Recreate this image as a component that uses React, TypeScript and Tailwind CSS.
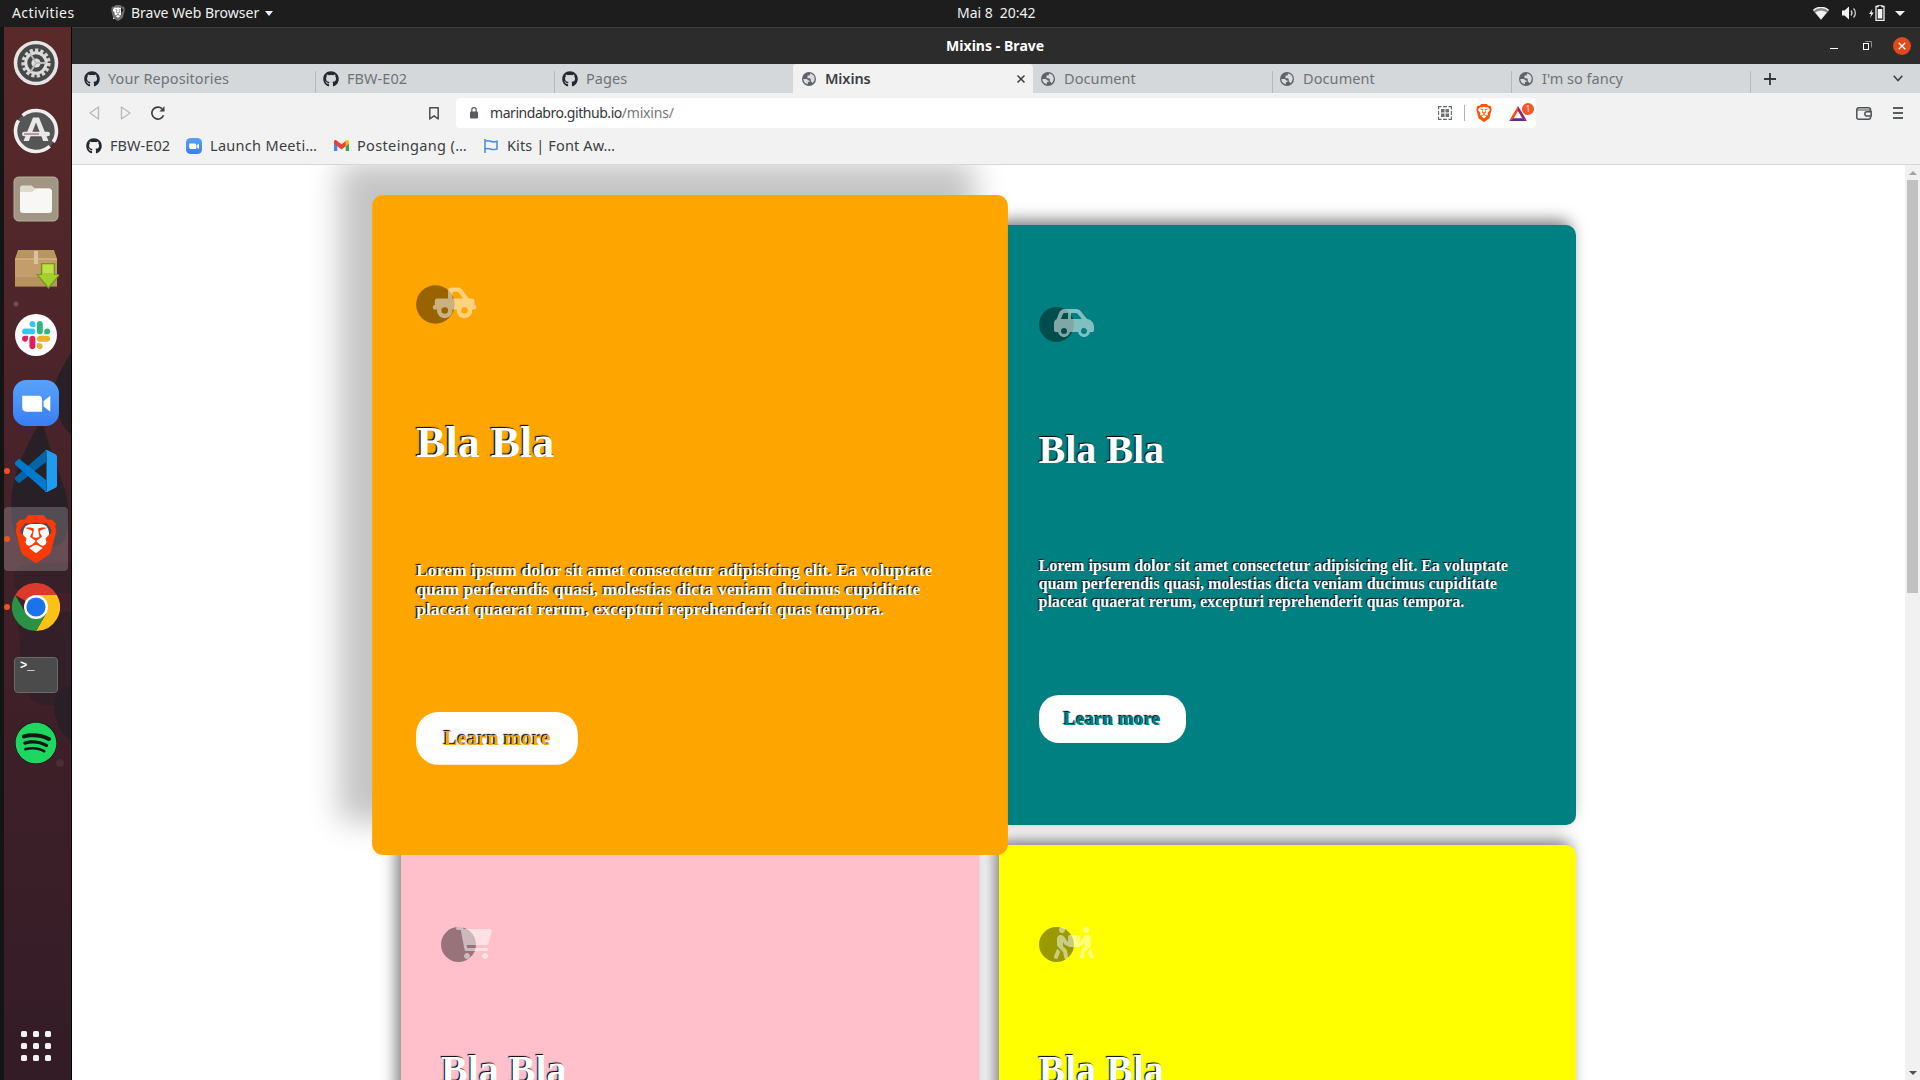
import type { ReactNode } from "react";
import { FaCarSide, FaTruckPickup, FaPeopleCarryBox, FaGithub, FaSpotify } from "react-icons/fa6";
import { SiBrave } from "react-icons/si";

/* ---------- Shared glyphs ---------- */

function Brave({ size, gradient }: { size: number; gradient?: boolean }) {
  return (
    <span className="relative grid place-items-center" style={{ width: size, height: size }}>
      <span className="absolute h-[62%] w-[56%] rounded-[30%] bg-white" />
      <SiBrave size={size} className={gradient ? "relative text-[#fb3a08]" : "relative text-[#fb5607]"} />
    </span>
  );
}

function Globe() {
  return (
    <svg width="14" height="14" viewBox="0 0 14 14">
      <circle cx="7" cy="7" r="7" fill="#5f6368" />
      <path d="M1.3 7h3.4c.9 0 1 1.6 2 1.6h.8v1.5H5.9v2.1C3 11.800 1.300 9.600 1.300 7z" fill="#d9dcdf" />
      <path d="M5.500 4.900V3.600h2.200V2.200l.8-.7c2.500.6 4.100 2.600 4.200 5 0 2-1 3.800-2.500 4.800 0-1-.4-1.500-1.400-1.500V7.600c-.2-1-.8-1.300-1.800-1.300H5.500z" fill="#d9dcdf" />
    </svg>
  );
}

function ZoomLogo({ size }: { size: number }) {
  return (
    <svg width={size} height={size} viewBox="0 0 45 45">
      <defs>
        <linearGradient id="zoomBlue" x1="0" y1="0" x2="0" y2="1">
          <stop offset="0" stopColor="#57a2fb" />
          <stop offset="1" stopColor="#3b7df5" />
        </linearGradient>
      </defs>
      <rect width="45" height="45" rx="13" fill="url(#zoomBlue)" />
      <path d="M9 15.500h15.500a4 4 0 0 1 4 4V31H13a4 4 0 0 1-4-4z" fill="#fff" />
      <path d="M30 20.500l6.500-5v15.500l-6.500-5z" fill="#fff" />
    </svg>
  );
}

/* ---------- Desktop top bar ---------- */

function TopBar() {
  return (
    <header className="relative flex h-[27px] shrink-0 items-center justify-between bg-[#1d1d1d] font-['Noto_Sans',sans-serif] text-[14px] leading-none text-[#f0f0f0]">
      <div className="flex items-center pb-px pl-3">
        <span className="w-[98px] tracking-[0.42px]">Activities</span>
        <span className="relative grid h-4 w-[14px] place-items-center">
          <span className="absolute h-3 w-2 bg-white" />
          <SiBrave size={16} className="relative text-[#6f6f6f]" />
        </span>
        <span className="ml-[7px]">Brave Web Browser</span>
        <span className="ml-[6px] mt-px border-x-[4.5px] border-t-[5px] border-x-transparent border-t-[#f0f0f0]" />
      </div>
      <div className="absolute left-[957px] flex gap-[7px] pb-px">
        <span>Mai 8</span>
        <span>20:42</span>
      </div>
      <div className="flex items-center pb-px pr-[15px]">
        <svg width="16" height="13" viewBox="0 0 16 13">
          <path d="M0 3.600C4.500-.6 11.500-.6 16 3.600L8 13z" fill="#8a8a8a" />
          <path d="M.3 3.300C4.500-.6 11.500-.6 15.700 3.300" fill="none" stroke="#f2f2f2" strokeWidth="1.400" />
          <path d="M2.300 5.500C5.500 3 10.500 3 13.700 5.500L8 12.500z" fill="#f2f2f2" />
        </svg>
        <svg className="ml-[13px]" width="15" height="14" viewBox="0 0 15 14">
          <path d="M0 4.500h2.500L7 .5v13L2.500 9.500H0z" fill="#f2f2f2" />
          <path d="M9 4.500c1.200 1.500 1.200 3.500 0 5M11.500 2.500c2.500 2.500 2.500 6.500 0 9" fill="none" stroke="#d0d0d0" strokeWidth="1.300" />
        </svg>
        <svg className="ml-[12px]" width="16" height="16" viewBox="0 0 16 16">
          <path d="M3.500 4L0 9h2.200L1 13l3.700-5.500H2.500z" fill="#f2f2f2" />
          <path d="M9 1.500V0h4v1.500h2V15.300H7V1.500z" fill="none" stroke="#f2f2f2" strokeWidth="1.300" />
          <rect x="8.700" y="4" width="4.600" height="9.500" fill="#f2f2f2" />
        </svg>
        <span className="ml-[10px] border-x-[5px] border-t-[5px] border-x-transparent border-t-[#f0f0f0]" />
      </div>
    </header>
  );
}

/* ---------- Dock ---------- */

function DockItem({ children, running, active }: { children: ReactNode; running?: boolean; active?: boolean }) {
  return (
    <div className="relative flex h-[68px] w-full items-center justify-center">
      {active && <span className="absolute inset-x-1 inset-y-[2px] rounded-[4px] bg-white/20" />}
      {running && <span className="absolute left-1 top-[31px] size-[6px] rounded-full bg-[#e95420]" />}
      <span className="relative">{children}</span>
    </div>
  );
}

function SettingsIcon() {
  return (
    <svg width="46" height="46" viewBox="0 0 46 46">
      <circle cx="23" cy="23" r="20.500" fill="#484848" stroke="#e4e4e4" strokeWidth="3.600" />
      <circle cx="23" cy="23" r="12.800" fill="none" stroke="#d6d6d6" strokeWidth="3.600" strokeDasharray="3.200 2.160" />
      <circle cx="23" cy="23" r="10.200" fill="none" stroke="#dcdcdc" strokeWidth="3" />
      <circle cx="23" cy="23" r="4.600" fill="#e0e0e0" />
      <path d="M23 23h10M23 23l-5.500-9M23 23l-5.500 9" stroke="#bdbdbd" strokeWidth="1.800" />
    </svg>
  );
}

function SoftwareIcon() {
  return (
    <svg width="46" height="46" viewBox="0 0 46 46">
      <circle cx="23" cy="23" r="21" fill="#565656" />
      <circle cx="23" cy="23" r="20.500" fill="none" stroke="#eee" strokeWidth="3.600" strokeDasharray="58 6.400" transform="rotate(48 23 23)" />
      <path d="M20 9.500h6L35.500 33h-5.300L23 14.500 15.800 33h-5.300z" fill="#e8e8e8" />
      <rect x="9" y="23.800" width="28" height="4.400" rx="2.200" fill="#e8e8e8" />
      <path d="M11 26h15" stroke="#87407a" strokeWidth="1" />
    </svg>
  );
}

function FilesIcon() {
  return (
    <svg width="46" height="46" viewBox="0 0 46 46">
      <rect x="1" y="1" width="44" height="44" rx="4.500" fill="#a09683" stroke="#b8af9d" strokeWidth="1" />
      <path d="M7 12a2.500 2.500 0 0 1 2.500-2.500h9l3.500 3h15v8H7z" fill="#dedacd" />
      <path d="M7 16h12.500l3-3.500H36a3 3 0 0 1 3 3V34a3 3 0 0 1-3 3H10a3 3 0 0 1-3-3z" fill="#f8f7f5" />
    </svg>
  );
}

function PackageIcon() {
  return (
    <svg className="mt-[3px]" width="46" height="40" viewBox="0 0 46 40">
      <path d="M5 1h36l3 9H2z" fill="#ba9560" />
      <path d="M2 10h42v27.500H2z" fill="#c39e6b" />
      <path d="M2 28h42v9.500H2z" fill="#a9854f" opacity=".5" />
      <path d="M2 10h42" stroke="#dcc096" />
      <path d="M21 2h4v13h-4z" fill="#d9c2a0" />
      <path d="M28.500 14.500h13v11h5L35.500 39 24 25.500h4.500z" fill="#a5d02c" stroke="#6d9a22" strokeWidth="1.200" />
      <path d="M30 16h10v8H30z" fill="#d0e65b" opacity=".7" />
    </svg>
  );
}

function SlackIcon() {
  return (
    <svg width="42" height="42" viewBox="0 0 42 42">
      <circle cx="21" cy="21" r="21" fill="#fff" />
      <g transform="translate(7 7) scale(.2296)">
        <path d="M25.800 77.600c0 7.100-5.800 12.900-12.900 12.900S0 84.700 0 77.600s5.800-12.900 12.900-12.900h12.900zM32.300 77.600c0-7.100 5.800-12.900 12.900-12.900s12.900 5.800 12.900 12.900v32.300c0 7.100-5.800 12.900-12.900 12.900s-12.900-5.800-12.900-12.900z" fill="#E01E5A" />
        <path d="M45.200 25.800c-7.100 0-12.900-5.800-12.900-12.900S38.100 0 45.200 0s12.900 5.800 12.900 12.900v12.900zM45.200 32.300c7.100 0 12.900 5.800 12.900 12.900s-5.800 12.900-12.900 12.900H12.900C5.800 58.100 0 52.300 0 45.200s5.800-12.900 12.900-12.900z" fill="#36C5F0" />
        <path d="M97 45.200c0-7.100 5.800-12.900 12.900-12.900s12.900 5.800 12.900 12.900-5.800 12.900-12.900 12.900H97zM90.500 45.200c0 7.100-5.800 12.900-12.900 12.900s-12.900-5.800-12.900-12.900V12.900C64.700 5.800 70.500 0 77.600 0s12.900 5.800 12.900 12.900z" fill="#2EB67D" />
        <path d="M77.600 97c7.100 0 12.900 5.800 12.900 12.900s-5.800 12.900-12.900 12.900-12.900-5.800-12.900-12.900V97zM77.600 90.500c-7.100 0-12.900-5.800-12.900-12.900s5.800-12.900 12.900-12.900h32.300c7.100 0 12.900 5.800 12.900 12.900s-5.800 12.900-12.900 12.900z" fill="#ECB22E" />
      </g>
    </svg>
  );
}

function CodeIcon() {
  return (
    <svg width="42" height="42" viewBox="0 0 42 42">
      <path d="M0 27.500L31 0v12L5 32.500a1.500 1.500 0 0 1-2 0L.5 30a1.700 1.700 0 0 1-.5-2.500z" fill="#0065a9" />
      <path d="M0 14.500L31 42V30L5 9.500a1.500 1.500 0 0 0-2 0L.5 12A1.700 1.700 0 0 0 0 14.500z" fill="#007acc" />
      <path d="M31 42a2.800 2.800 0 0 1-1.500-.8c.8.8 2 .2 2-.9V1.700c0-1.100-1.200-1.700-2-.9A2.800 2.800 0 0 1 32.500.3l8 3.900A2.600 2.600 0 0 1 42 6.500v29a2.600 2.600 0 0 1-1.500 2.300l-8 3.900a2.600 2.600 0 0 1-1.500.3z" fill="#1f9cf0" />
    </svg>
  );
}

function ChromeIcon() {
  return (
    <svg width="48" height="48" viewBox="0 0 48 48">
      <path d="M24 24L3.200 12A24 24 0 0 1 44.800 12z" fill="#dc3a2d" />
      <path d="M24 12h20.800A24 24 0 0 1 24 48l10.400-18z" fill="#fbc116" />
      <path d="M3.200 12A24 24 0 0 0 24 48l10.400-18H13.600z" fill="#2a9245" />
      <circle cx="24" cy="24" r="12" fill="#fff" />
      <circle cx="24" cy="24" r="9.600" fill="#1a73e8" />
    </svg>
  );
}

function TerminalIcon() {
  return (
    <div className="h-9 w-11 rounded-[4px] border border-[#6a6a6a] bg-[#4b4b4b] pl-[5px] pt-[2px] font-['Liberation_Mono',monospace] text-[12px] font-bold leading-[12px] text-white">
      &gt;_
    </div>
  );
}

function Dock() {
  return (
    <aside className="relative flex w-[72px] shrink-0 flex-col border-l-4 border-r border-l-[#141414] border-r-black bg-linear-to-b from-[#5a2a2a] via-[#44212a] to-[#331c26] pt-[2px]">
      <svg className="absolute left-0 top-0" width="67" height="760" viewBox="0 0 67 760" fill="#232027" fillOpacity=".85">
        <path d="M67 325C56 345 48 356 50 372c3 16 8 28 17 36z" />
        <path d="M34 398C22 420 12 440 8 465c-2 18-1 32 5 48 10 12 18 4 22-2 6 8 20 12 26 0 6-16 4-34 0-48C54 440 46 424 40 400z" />
        <path d="M10 545c14-14 40-6 57-10v32c-20-4-40 4-57-6z" fillOpacity=".35" />
        <path d="M10 590c10 20 4 50 10 70s30 22 47 14v-90z" fillOpacity=".45" />
        <path d="M67 660c-16 0-20 18-15 32 4 14 9 18 15 22z" fillOpacity=".7" />
        <circle cx="12" cy="277" r="2.500" fill="#8a6a6a" fillOpacity=".6" />
        <circle cx="56" cy="736" r="4" fill="#6a5054" fillOpacity=".3" />
      </svg>
      <div className="-ml-1 flex w-[72px] flex-col">
        <DockItem><SettingsIcon /></DockItem>
        <DockItem><SoftwareIcon /></DockItem>
        <DockItem><FilesIcon /></DockItem>
        <DockItem><PackageIcon /></DockItem>
        <DockItem><SlackIcon /></DockItem>
        <DockItem><ZoomLogo size={46} /></DockItem>
        <DockItem running><CodeIcon /></DockItem>
        <DockItem running active><Brave size={48} gradient /></DockItem>
        <DockItem running><ChromeIcon /></DockItem>
        <DockItem><TerminalIcon /></DockItem>
        <DockItem>
          <span className="grid size-[42px] place-items-center rounded-full bg-[#161616]">
            <FaSpotify size={42} className="text-[#1ed760]" />
          </span>
        </DockItem>
      </div>
      <div className="mb-[19px] ml-[17px] mt-auto grid w-[30px] grid-cols-3 gap-[6px]">
        {Array.from({ length: 9 }, (_, i) => (
          <span key={i} className="size-[6px] rounded-[1.5px] bg-[#f2f2f2]" />
        ))}
      </div>
    </aside>
  );
}

/* ---------- Browser chrome ---------- */

function TitleBar() {
  return (
    <div className="relative flex h-[37px] shrink-0 items-center justify-end border-t border-[#3d3d3d] bg-[#2c2c2c] pb-px pr-[9px] font-['Noto_Sans',sans-serif]">
      <div className="absolute left-[874px] top-[11px] text-[14px] font-bold leading-none tracking-[0.05px] text-white">Mixins - Brave</div>
      <span className="mr-[25px] mt-[5px] h-px w-2 bg-white" />
      <svg className="mr-[21px]" width="9" height="9" viewBox="0 0 9 9" fill="none">
        <path d="M2.500.5h6v6" stroke="#8c8c8c" />
        <rect x=".5" y="2.500" width="5" height="6" stroke="#fff" />
      </svg>
      <span className="grid size-[18px] place-items-center rounded-full bg-[#e2491a]">
        <svg width="8" height="8" viewBox="0 0 8 8">
          <path d="M.7.7l6.600 6.600M7.300.7L.7 7.300" stroke="#fff" strokeWidth="1.300" />
        </svg>
      </span>
    </div>
  );
}

type Tab = { title: string; icon: "github" | "globe"; active?: boolean; line?: boolean; tracking: string };

const tabs: Tab[] = [
  { title: "Your Repositories", icon: "github", line: true, tracking: "tracking-[0.09px]" },
  { title: "FBW-E02", icon: "github", line: true, tracking: "tracking-[0.05px]" },
  { title: "Pages", icon: "github", tracking: "tracking-[0.05px]" },
  { title: "Mixins", icon: "globe", active: true, tracking: "tracking-[0.1px]" },
  { title: "Document", icon: "globe", line: true, tracking: "tracking-[0.09px]" },
  { title: "Document", icon: "globe", line: true, tracking: "tracking-[0.09px]" },
  { title: "I'm so fancy", icon: "globe", line: true, tracking: "tracking-[0px]" },
];

function TabStrip() {
  return (
    <div className="flex h-[29px] shrink-0 bg-[#d4d8db] pl-[4px] text-[14.5px] leading-none">
      {tabs.map((tab, i) => (
        <div
          key={i}
          className={
            tab.active
              ? "relative flex w-[240px] items-center rounded-t-[4px] bg-[#f2f2f2] pl-[9px] text-[#3b3e42]"
              : "relative flex w-[239px] items-center pl-[8px] text-[#6f7376]"
          }
        >
          {tab.icon === "github" ? <FaGithub size={16} className="text-[#24292f]" /> : <Globe />}
          <span className={(tab.icon === "github" ? "ml-2 " : "ml-[9px] ") + (tab.active ? "font-semibold tracking-[-0.1px]" : tab.tracking)}>{tab.title}</span>
          {tab.active && (
            <svg className="absolute right-[8px]" width="8" height="8" viewBox="0 0 8 8">
              <path d="M.5.5l7 7M7.500.5l-7 7" stroke="#3a3d40" strokeWidth="1.500" />
            </svg>
          )}
          {tab.line && <span className="absolute -right-px bottom-0 h-[22px] w-px bg-[#b5b9bd]" />}
        </div>
      ))}
      <div className="flex flex-1 items-center justify-between pl-[14px] pr-[17px]">
        <svg width="12" height="12" viewBox="0 0 12 12">
          <path d="M6 0v12M0 6h12" stroke="#33373a" strokeWidth="1.800" />
        </svg>
        <svg width="10" height="7" viewBox="0 0 10 7" fill="none">
          <path d="M.7.800L5 5.500 9.300.800" stroke="#3f4346" strokeWidth="1.600" />
        </svg>
      </div>
    </div>
  );
}

function AddressRow() {
  return (
    <div className="flex h-10 shrink-0 items-center">
      <svg className="ml-[17px]" width="11" height="14" viewBox="0 0 11 14" fill="none">
        <path d="M9.500 1v12L1 7z" stroke="#b9bbbd" strokeWidth="1.400" strokeLinejoin="round" />
      </svg>
      <svg className="ml-[20px]" width="11" height="14" viewBox="0 0 11 14" fill="none">
        <path d="M1.500 1v12L10 7z" stroke="#b9bbbd" strokeWidth="1.400" strokeLinejoin="round" />
      </svg>
      <svg className="ml-[20px]" width="15" height="14" viewBox="0 0 15 14" fill="none">
        <path d="M12.500 9.200A6 6 0 1 1 11 2.700" stroke="#3b3e42" strokeWidth="1.700" />
        <path d="M13.500.300v5.200H8.300z" fill="#3b3e42" />
      </svg>
      <svg className="ml-[263px]" width="10" height="13" viewBox="0 0 10 13" fill="none">
        <path d="M.8.800h8.400v11.200L5 8.800.8 12z" stroke="#4a4d50" strokeWidth="1.500" strokeLinejoin="round" />
      </svg>
      <div className="ml-[17px] flex h-[30px] w-[1080px] items-center rounded-[4px] bg-white pl-[14px] pr-[2px] text-[14px] leading-none">
        <svg width="8" height="12" viewBox="0 0 8 12">
          <rect y="4.500" width="8" height="7" rx="1" fill="#5a5d61" />
          <path d="M1.800 5V2.800a2.200 2.200 0 0 1 4.400 0V5" fill="none" stroke="#5a5d61" strokeWidth="1.200" />
        </svg>
        <span className="ml-[12px] tracking-[-0.45px] text-[#34373b]">marindabro.github.io</span>
        <span className="tracking-[-0.2px] text-[#75787c]">/mixins/</span>
        <div className="ml-auto flex items-center">
          <svg width="14" height="14" viewBox="0 0 14 14">
            <path d="M.6 3.500V.6h2.900M5 .6h4M10.500.6h2.900v2.900M13.400 5v4M13.400 10.500v2.900h-2.900M9 13.400H5M3.500 13.400H.6v-2.900M.6 9V5" fill="none" stroke="#66696c" strokeWidth="1.100" />
            <path d="M3 3h3.500v3.500H3zM7.500 3H11v3.500H7.500zM3 7.500h3.500V11H3zM7.500 7.500H11V11H7.500z" fill="#6f7275" />
          </svg>
          <span className="ml-[12px] h-4 w-px bg-[#b0b3b6]" />
          <span className="ml-[10px]"><Brave size={18} /></span>
          <span className="relative ml-[16px] mr-[7px] mt-px">
            <svg width="18" height="15" viewBox="0 0 18 15">
              <path d="M9 0L0 15l4.600-2.500L9 5z" fill="#ff4724" />
              <path d="M9 0l9 15-4.600-2.500L9 5z" fill="#9e1f63" />
              <path d="M0 15h18l-4.600-2.700H4.600z" fill="#662d91" />
            </svg>
            <span className="absolute -right-[7px] -top-[3px] grid size-3 place-items-center rounded-full bg-[#fb542b] text-[8px] leading-none text-white">1</span>
          </span>
        </div>
      </div>
      <svg className="ml-auto" width="16" height="13" viewBox="0 0 16 13" fill="none" stroke="#4e5154" strokeWidth="1.500">
        <path d="M14.500 4V2.800a2 2 0 0 0-2-2H2.800a2 2 0 0 0-2 2v7.400a2 2 0 0 0 2 2h9.700a2 2 0 0 0 2-2V9.500" />
        <path d="M1 3h13.500V5" strokeWidth="1.200" />
        <path d="M15.200 4.700H11a2 2 0 0 0 0 4.400h4.200z" />
      </svg>
      <div className="ml-[21px] mr-[17px] flex w-[10px] flex-col gap-[3px]">
        <span className="h-[2px] bg-[#5a5d60]" />
        <span className="h-[2px] bg-[#5a5d60]" />
        <span className="h-[2px] bg-[#5a5d60]" />
      </div>
    </div>
  );
}

function BookmarksRow() {
  return (
    <div className="flex h-8 shrink-0 items-center border-b border-[#d4d8db] pb-[6px] pl-[14px] text-[14.5px] leading-none text-[#3b3e42]">
      <FaGithub size={16} className="text-[#24292f]" />
      <span className="ml-2 w-[76px] tracking-[0.05px]">FBW-E02</span>
      <ZoomLogo size={16} />
      <span className="ml-2 w-[124px] tracking-[0.3px]">Launch Meeti…</span>
      <svg width="15" height="11" viewBox="0 0 15 11">
        <path d="M0 1.500V11h3.300V3.500z" fill="#4285f4" />
        <path d="M15 1.500V11h-3.300V3.500z" fill="#34a853" />
        <path d="M11.700 1l1-.7A1.400 1.400 0 0 1 15 1.500v2.300l-3.300 2.500z" fill="#fbbc04" />
        <path d="M3.300 1l-1-.7A1.400 1.400 0 0 0 0 1.500v2.300l7.500 5.700 4.200-3.200V1L7.500 4.200z" fill="#ea4335" />
      </svg>
      <span className="ml-2 w-[127px] tracking-[0.35px]">Posteingang (…</span>
      <svg width="14" height="14" viewBox="0 0 14 14" fill="none" stroke="#4d8fdb" strokeWidth="1.600">
        <path d="M1 0v14" />
        <path d="M1 2.300c2.200-.8 3.700-.8 5.500 0s3.700.8 6.500 0v7.700c-2.800.8-4.700.8-6.500 0s-3.300-.8-5.500 0" />
      </svg>
      <span className="ml-[9px] tracking-[0.13px]">Kits | Font Aw…</span>
    </div>
  );
}

/* ---------- Page ---------- */

function CartIcon() {
  return (
    <svg width="36" height="32" viewBox="0 0 576 512" fill="currentColor">
      <path d="M96 0C107.500 0 117.400 8.190 119.600 19.510L121.100 32H541.800C562.100 32 578.300 52.250 572.600 72.660L518.600 264.700C514.700 278.500 502.100 288 487.800 288H170.700L179.900 336H488C501.300 336 512 346.700 512 360C512 373.300 501.300 384 488 384H159.100C148.500 384 138.600 375.800 136.400 364.500L76.140 48H24C10.750 48 0 37.250 0 24C0 10.750 10.750 0 24 0H96zM128 464C128 437.500 149.500 416 176 416C202.500 416 224 437.500 224 464C224 490.500 202.500 512 176 512C149.500 512 128 490.500 128 464zM512 464C512 490.500 490.500 512 464 512C437.500 512 416 490.500 416 464C416 437.500 437.500 416 464 416C490.500 416 512 437.500 512 464z" />
    </svg>
  );
}

type CardProps = { card: string; button: string; icon: ReactNode };

const cards: CardProps[] = [
  {
    card: "z-10 scale-110 bg-[#ffa500] shadow-[-30px_-30px_28px_rgba(0,0,0,0.23)]",
    button: "text-[#ffa500]",
    icon: <FaTruckPickup className="h-8 w-10" />,
  },
  {
    card: "bg-[#008080] shadow-[-5px_-5px_15px_rgba(0,0,0,0.5)]",
    button: "text-[#008080]",
    icon: <FaCarSide className="h-8 w-10" />,
  },
  {
    card: "bg-[#ffc0cb] shadow-[-5px_-5px_15px_rgba(0,0,0,0.5)]",
    button: "text-[#ffc0cb]",
    icon: <CartIcon />,
  },
  {
    card: "bg-[#ffff00] shadow-[-5px_-5px_15px_rgba(0,0,0,0.5)]",
    button: "text-[#ffff00]",
    icon: <FaPeopleCarryBox className="h-8 w-10" />,
  },
];

function Card({ card, button, icon }: CardProps) {
  return (
    <article className={"relative flex h-[600px] flex-col items-start justify-around rounded-[10px] p-10 text-white [text-shadow:-1px_-1px_1px_#000] " + card}>
      <div className="relative size-[35px] rounded-full bg-black/40">
        <span className="absolute left-[15px] top-0 text-white/50">{icon}</span>
      </div>
      <h1 className="pt-px text-[40px] font-bold leading-[46px]">Bla Bla</h1>
      <p className="text-[16px] font-bold leading-[18px]">
        Lorem ipsum dolor sit amet consectetur adipisicing elit. Ea voluptate quam perferendis quasi, molestias dicta veniam
        ducimus cupiditate placeat quaerat rerum, excepturi reprehenderit quas tempora.
      </p>
      <button className={"h-12 w-[147px] rounded-[20px] bg-white text-[19.200px] font-bold leading-[22px] [text-shadow:-1px_-1px_1px_#000] " + button}>
        Learn more
      </button>
    </article>
  );
}

function Scrollbar() {
  return (
    <div className="flex w-[15px] shrink-0 flex-col items-center bg-[#f1f1f1]">
      <span className="mt-[6px] border-x-4 border-b-4 border-x-transparent border-b-[#a3a3a3]" />
      <span className="mt-[5px] h-[413px] w-[11px] bg-[#c1c1c1]" />
      <span className="mb-[5px] mt-auto border-x-4 border-t-4 border-x-transparent border-t-[#505050]" />
    </div>
  );
}

export default function App() {
  return (
    <div className="flex h-[1080px] w-[1920px] flex-col overflow-hidden bg-white">
      <TopBar />
      <div className="flex min-h-0 flex-1">
        <Dock />
        <div className="flex min-w-0 flex-1 flex-col bg-[#f2f2f2] font-['Noto_Sans',sans-serif]">
          <TitleBar />
          <TabStrip />
          <AddressRow />
          <BookmarksRow />
          <div className="flex min-h-0 flex-1 bg-white">
            <main className="flex-1 overflow-hidden pt-[60px] font-['Liberation_Serif',serif]">
              <div className="mx-auto grid w-[1175px] grid-cols-2 gap-5">
                {cards.map((c, i) => (
                  <Card key={i} {...c} />
                ))}
              </div>
            </main>
            <Scrollbar />
          </div>
        </div>
      </div>
    </div>
  );
}
